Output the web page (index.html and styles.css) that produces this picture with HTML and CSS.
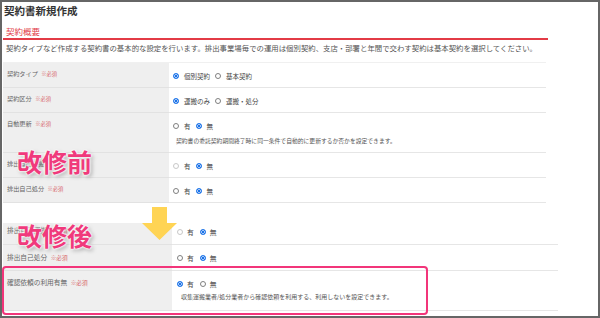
FILE: index.html
```html
<!DOCTYPE html>
<html lang="ja">
<head>
  <meta charset="UTF-8" />
  <meta name="viewport" content="width=device-width, initial-scale=1.0"/>
  <title>契約書新規作成 - 改修前後</title>
  <link rel="stylesheet" href="styles.css">
</head>
<body>
  <div class="frame">
    <section class="shot before">
      <h1 class="page-title">契約書新規作成</h1>
      <h2 class="sec-title">契約概要</h2>
      <p class="sec-desc">契約タイプなど作成する契約書の基本的な設定を行います。排出事業場毎での運用は個別契約、支店・部署と年間で交わす契約は基本契約を選択してください。</p>

      <table class="form">
        <tr>
          <th>契約タイプ <span class="req">※必須</span></th>
          <td><span class="opt"><span class="radio on"></span>個別契約</span><span class="opt"><span class="radio"></span>基本契約</span></td>
        </tr>
        <tr>
          <th>契約区分 <span class="req">※必須</span></th>
          <td><span class="opt"><span class="radio on"></span>運搬のみ</span><span class="opt"><span class="radio"></span>運搬・処分</span></td>
        </tr>
        <tr>
          <th>自動更新 <span class="req">※必須</span></th>
          <td>
            <span class="opt"><span class="radio"></span>有</span><span class="opt"><span class="radio on"></span>無</span>
            <p class="hint">契約書の委託契約期間終了時に同一条件で自動的に更新するか否かを設定できます。</p>
          </td>
        </tr>
        <tr>
          <th>排出自己運搬 <span class="req">※必須</span></th>
          <td><span class="opt"><span class="radio off"></span>有</span><span class="opt"><span class="radio on"></span>無</span></td>
        </tr>
        <tr>
          <th>排出自己処分 <span class="req">※必須</span></th>
          <td><span class="opt"><span class="radio"></span>有</span><span class="opt"><span class="radio on"></span>無</span></td>
        </tr>
      </table>
    </section>

    <section class="shot after">
      <table class="form">
        <tr class="cut">
          <th>排出自己運搬 <span class="req">※必須</span></th>
          <td><span class="opt"><span class="radio off"></span>有</span><span class="opt"><span class="radio on"></span>無</span></td>
        </tr>
        <tr class="mid">
          <th>排出自己処分 <span class="req">※必須</span></th>
          <td><span class="opt"><span class="radio"></span>有</span><span class="opt"><span class="radio on"></span>無</span></td>
        </tr>
        <tr class="last">
          <th>確認依頼の利用有無 <span class="req">※必須</span></th>
          <td>
            <span class="opt"><span class="radio on"></span>有</span><span class="opt"><span class="radio"></span>無</span>
            <p class="hint">収集運搬業者/処分業者から確認依頼を利用する、利用しないを設定できます。</p>
          </td>
        </tr>
      </table>
    </section>

    <div class="highlight"></div>
    <div class="note note-before">改修前</div>
    <div class="note note-after">改修後</div>
    <svg class="arrow" width="42" height="40" viewBox="0 0 42 40">
      <polygon points="12,2 27,2 27,18 37,18 19.5,35 2,18 12,18" fill="#ffd454"/>
    </svg>
  </div>
</body>
</html>
```

FILE: styles.css
```css
body { margin: 0; font-family: "Noto Sans CJK JP", "Noto Sans", sans-serif; background: #fff; }
.frame { position: relative; width: 600px; height: 318px; box-sizing: border-box; border: 2px solid #666; overflow: hidden; background: #fff; }

.page-title { margin: 0; padding: 2px 0 0 2px; font-size: 10.5px; line-height: 14px; font-weight: bold; color: #333; }
.sec-title { margin: 7px 0 0 1px; width: 545px; box-sizing: border-box; padding: 0 0 1px 3px; font-size: 8.5px; line-height: 12px; font-weight: normal; color: #e2414b; border-bottom: 2px solid #e33b46; }
.sec-desc { margin: 3px 0 9px 4px; font-size: 7.4px; line-height: 10px; color: #555; white-space: nowrap; }

.form { border-collapse: collapse; margin-left: 1px; width: 543px; border-top: 1px solid #f0f0f0; }
.form th { width: 162px; padding: 6px 0 0 4px; background: #efefef; text-align: left; vertical-align: top; font-weight: normal; font-size: 6.2px; line-height: 10px; color: #666; border-bottom: 1px solid #e2e2e2; white-space: nowrap; }
.form td { padding: 8px 0 6px 4px; vertical-align: top; font-size: 6.5px; line-height: 10px; color: #444; border-bottom: 1px solid #e6e6e6; white-space: nowrap; }
.req { color: #d8666a; font-size: 0.85em; margin-left: 2px; }

.opt { display: inline-flex; align-items: center; margin-right: 5px; }
.radio { display: inline-block; width: 6px; height: 6px; box-sizing: border-box; border-radius: 50%; border: 1px solid #808080; background: #fff; margin-right: 5px; }
.radio.on { border-color: #1a73e8; background: radial-gradient(circle, #1a73e8 0 1.4px, #cfe0fb 1.6px 1.9px, #1a73e8 2.1px); }
.radio.off { border-color: #c8c8c8; }
.hint { margin: 5px 0 0 3px; font-size: 5.8px; line-height: 10px; color: #555; }

.after { margin-top: 20px; }
.after .form { width: 555px; border-top: 0; }
.after .form th { width: 165px; font-size: 6.7px; }
.after .form td { padding-left: 5px; font-size: 6.8px; }
.after .opt { margin-right: 6px; }
.after .radio { margin-right: 4px; }
.after .hint { margin: 3px 0 0 4px; font-size: 6px; }
.after .cut th { padding-top: 2px; }
.after .cut td { padding: 4px 0 7px 5px; }
.after .mid th { padding-top: 7px; }
.after .mid td { padding-bottom: 7px; }
.after .last td { padding-bottom: 8px; }

.highlight { position: absolute; left: 0; top: 264px; width: 426px; height: 49px; box-sizing: border-box; border: 2px solid #f2357a; border-radius: 4px; }
.note { position: absolute; left: 15px; font-size: 25px; line-height: 25px; font-weight: bold; color: #f03a7c;
  text-shadow: 0 0 2px #fff, 0 0 2px #fff, 0 0 3px #fff, 2px 2px 4px rgba(0,0,0,0.35); }
.note-before { top: 147px; }
.note-after { top: 221px; }
.arrow { position: absolute; left: 138px; top: 203px; }
```
